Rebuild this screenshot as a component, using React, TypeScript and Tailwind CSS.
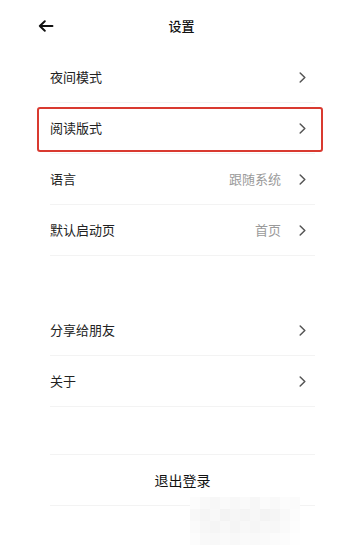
type Item = { label: string; value?: string; marked?: boolean };

const groupOne: Item[] = [
  { label: "夜间模式" },
  { label: "阅读版式", marked: true },
  { label: "语言", value: "跟随系统" },
  { label: "默认启动页", value: "首页" },
];

const groupTwo: Item[] = [{ label: "分享给朋友" }, { label: "关于" }];

// faint mosaic left over from a blurred watermark
const mosaic = [
  "#fcfcfc", "#f9f9f9", "#f7f7f7", "#fafafa", "#f8f8f8", "#fafafa", "#f7f7f7", "#fbfbfb", "#f9f9f9", "#fcfcfc", "#fbfbfb",
  "#f8f8f8", "#f5f5f5", "#f8f8f8", "#f3f3f3", "#f6f6f6", "#f4f4f4", "#f7f7f7", "#f3f3f3", "#f5f5f5", "#f9f9f9", "#fcfcfc",
  "#fafafa", "#f7f7f7", "#f5f5f5", "#f8f8f8", "#f5f5f5", "#f8f8f8", "#f6f6f6", "#f8f8f8", "#f7f7f7", "#fafafa", "#fdfdfd",
  "#fcfcfc", "#f9f9f9", "#f8f8f8", "#fafafa", "#f8f8f8", "#fafafa", "#f9f9f9", "#fafafa", "#fbfbfb", "#fcfcfc", "#fefefe",
];

function Chevron() {
  return (
    <svg width="7" height="11" viewBox="0 0 7 11" fill="none" className="shrink-0">
      <polyline points="1.2,1 5.8,5.5 1.2,10" stroke="#555" strokeWidth="1.5" strokeLinecap="round" strokeLinejoin="round" />
    </svg>
  );
}

function Row({ item }: { item: Item }) {
  return (
    <div className="relative flex h-[51px] items-center border-b border-[#f3f3f3] pr-[9px]">
      <span className="flex-1 text-[13px] text-[#222]">{item.label}</span>
      {item.value && <span className="mr-[18px] text-[13px] text-[#9a9a9a]">{item.value}</span>}
      <Chevron />
      {item.marked && (
        <div className="pointer-events-none absolute -left-[13px] -right-[8px] top-[4px] bottom-[1px] rounded-[3px] border-[2.5px] border-[#d93a30]" />
      )}
    </div>
  );
}

export default function App() {
  return (
    <div
      className="relative h-[547px] w-[349px] overflow-hidden bg-white"
      style={{ fontFamily: '"Noto Sans CJK SC", "Noto Sans", sans-serif' }}
    >
      {/* Header */}
      <header className="relative flex h-[52px] items-center justify-center pl-[14px]">
        <svg
          width="16"
          height="12"
          viewBox="0 0 16 12"
          fill="none"
          className="absolute left-[38px] top-[20px]"
        >
          <path d="M14.5 6H1.8M6.8 1.2 1.8 6l5 4.8" stroke="#111" strokeWidth="1.9" strokeLinecap="round" strokeLinejoin="round" />
        </svg>
        <h1 className="text-[13px] font-medium text-[#111]">设置</h1>
      </header>

      <div className="pl-[50px] pr-[34px]">
        <div>
          {groupOne.map((item) => (
            <Row key={item.label} item={item} />
          ))}
        </div>

        <div className="mt-[49px]">
          {groupTwo.map((item) => (
            <Row key={item.label} item={item} />
          ))}
        </div>

        <div className="mt-[47px] flex h-[52px] items-center justify-center border-y border-[#f3f3f3]">
          <span className="text-[14px] text-[#111]">退出登录</span>
        </div>
      </div>

      <div className="pointer-events-none absolute left-[190px] top-[497px] grid grid-cols-11">
        {mosaic.map((c, i) => (
          <div key={i} className="h-[12px] w-[10px]" style={{ backgroundColor: c }} />
        ))}
      </div>
    </div>
  );
}
